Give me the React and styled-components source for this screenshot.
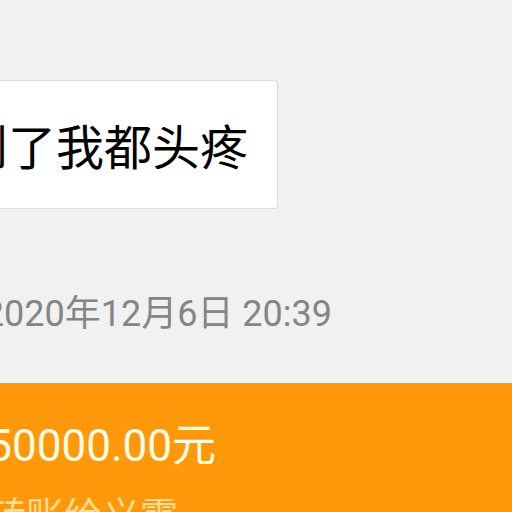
import React from "react";
import styled, { createGlobalStyle } from "styled-components";

const GlobalStyle = createGlobalStyle`
  body {
    margin: 0;
    background: #f1f1f1;
    font-family: Roboto, "Noto Sans CJK SC", sans-serif;
  }
`;

const Conversation = styled.main`
  display: flex;
  flex-direction: column;
  height: 100vh;
  overflow: hidden;
  padding-top: 80px;
  box-sizing: border-box;
  background: #f1f1f1;
`;

/* A line whose beginning runs off the left side of the screen. */
const Line = styled.div`
  display: flex;
  justify-content: flex-end;
  flex-shrink: 0;
  width: ${(p) => p.$width}px;
  overflow: hidden;
  white-space: pre;
`;

const Bubble = styled(Line)`
  box-sizing: border-box;
  padding: 32px 29px 24px 0;
  border: 1px solid #dcdcdc;
  border-left: 0;
  border-radius: 0 4px 4px 0;
  background: #fff;
  color: #000;
  font-size: 48px;
  line-height: 71px;
`;

const Timestamp = styled(Line)`
  margin: 84px 0 48px;
  color: #858585;
  font-size: 36px;
  line-height: 42px;
`;

const TransferCard = styled.section`
  flex: 1 0 auto;
  padding-top: 35px;
  background: #ff980b;
`;

const Amount = styled(Line)`
  color: #fffee4;
  font-size: 44px;
  line-height: 56px;
`;

const Recipient = styled(Line)`
  margin-top: 18px;
  color: #ffdc90;
  font-size: 38px;
  line-height: 48px;
`;

export default function App() {
  return (
    <>
      <GlobalStyle />
      <Conversation>
        <Bubble $width={278}>到了我都头疼</Bubble>
        <Timestamp as="time" dateTime="2020-12-06T20:39" $width={332}>
          2020年12月6日 20:39
        </Timestamp>
        <TransferCard>
          <Amount $width={216}>50000.00元</Amount>
          <Recipient $width={178}>转账给义霆</Recipient>
        </TransferCard>
      </Conversation>
    </>
  );
}
